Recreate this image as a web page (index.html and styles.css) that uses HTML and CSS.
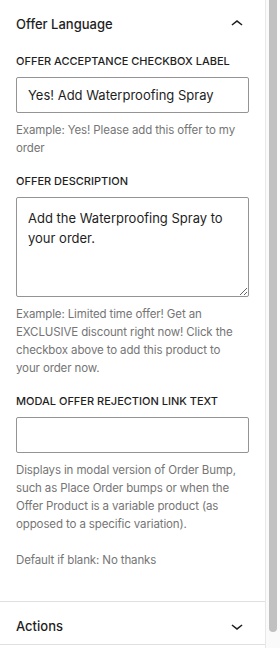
FILE: index.html
```html
<!DOCTYPE html>
<html lang="en">
<head>
    <meta charset="UTF-8">
    <meta name="viewport" content="width=device-width, initial-scale=1.0">
    <title>Order Bump settings</title>
    <link rel="stylesheet" href="styles.css">
</head>
<body>
    <div class="sidebar">
        <div class="panels">
            <!-- Offer Language -->
            <div class="panel">
                <div class="panel-header">
                    <span class="panel-title">Offer Language</span>
                    <svg class="chevron" width="24" height="24" viewBox="0 0 24 24"><path d="M6.5 12.4L12 8l5.5 4.4-.9 1.2L12 10l-4.6 3.6-1-1.2z"/></svg>
                </div>
                <div class="panel-body">
                    <div class="field">
                        <label class="field-label">Offer Acceptance Checkbox Label</label>
                        <input class="field-input" type="text" value="Yes! Add Waterproofing Spray">
                        <p class="field-help">Example: Yes! Please add this offer to my order</p>
                    </div>
                    <div class="field">
                        <label class="field-label">Offer Description</label>
                        <textarea class="field-input field-textarea">Add the Waterproofing Spray to your order.</textarea>
                        <p class="field-help">Example: Limited time offer! Get an EXCLUSIVE discount right now! Click the checkbox above to add this product to<br>your order now.</p>
                    </div>
                    <div class="field">
                        <label class="field-label">Modal Offer Rejection Link Text</label>
                        <input class="field-input" type="text" value="">
                        <p class="field-help">Displays in modal version of Order Bump, such as Place Order bumps or when the Offer Product is a variable product (as opposed to a specific variation).</p>
                        <p class="field-help field-help-gap">Default if blank: No thanks</p>
                    </div>
                </div>
            </div>
            <!-- Actions -->
            <div class="panel panel-closed">
                <div class="panel-header">
                    <span class="panel-title">Actions</span>
                    <svg class="chevron" width="24" height="24" viewBox="0 0 24 24"><path d="M17.5 11.6L12 16l-5.5-4.4.9-1.2L12 14l4.6-3.6 1 1.2z"/></svg>
                </div>
            </div>
        </div>
        <!-- scrollbar -->
        <div class="scrollbar"><div class="thumb"></div></div>
    </div>
</body>
</html>
```

FILE: styles.css
```css
*{
    margin: 0;
    padding: 0;
    box-sizing: border-box;
}
body{
    background: #fff;
    font-family: Inter, "Liberation Sans", sans-serif;
    color: #1e1e1e;
}
.sidebar{
    display: flex;
    width: 280px;
    height: 648px;
    overflow: hidden;
}
.panels{
    width: 265px;
    flex: none;
}
.panel-header{
    height: 48px;
    padding: 0 16px;
    display: flex;
    justify-content: space-between;
    align-items: center;
}
.panel-title{
    font-size: 13px;
    font-weight: 500;
}
.chevron{
    fill: #1e1e1e;
}
.panel-body{
    padding: 5px 16px 16px;
    border-bottom: 1px solid #e0e0e0;
}
.field{
    margin-bottom: 16px;
}
.field-label{
    display: block;
    font-size: 11px;
    font-weight: 500;
    line-height: 16px;
    text-transform: uppercase;
    margin-bottom: 8px;
}
.field-input{
    display: block;
    width: 100%;
    height: 36px;
    padding: 0 11px;
    border: 1px solid #949494;
    border-radius: 2px;
    font-family: inherit;
    font-size: 13px;
    color: #1e1e1e;
    background: #fff;
}
.field-textarea{
    height: 100px;
    padding: 10px 11px;
    line-height: 20px;
    resize: vertical;
}
.field-help{
    margin-top: 8px;
    font-size: 11.5px;
    letter-spacing: -0.12px;
    line-height: 18px;
    color: #757575;
}
.field-help-gap{
    margin-top: 18px;
}
.panel-closed .panel-header{
    height: 43px;
    padding-top: 6px;
    border-bottom: 1px solid #e0e0e0;
}
.scrollbar{
    width: 15px;
    flex: none;
    background: #fafafa;
    border-left: 1px solid #e8e8e8;
    padding-left: 3px;
}
.thumb{
    width: 8px;
    height: 632px;
    background: #c1c1c1;
    border-radius: 0 0 4px 4px;
}
```
